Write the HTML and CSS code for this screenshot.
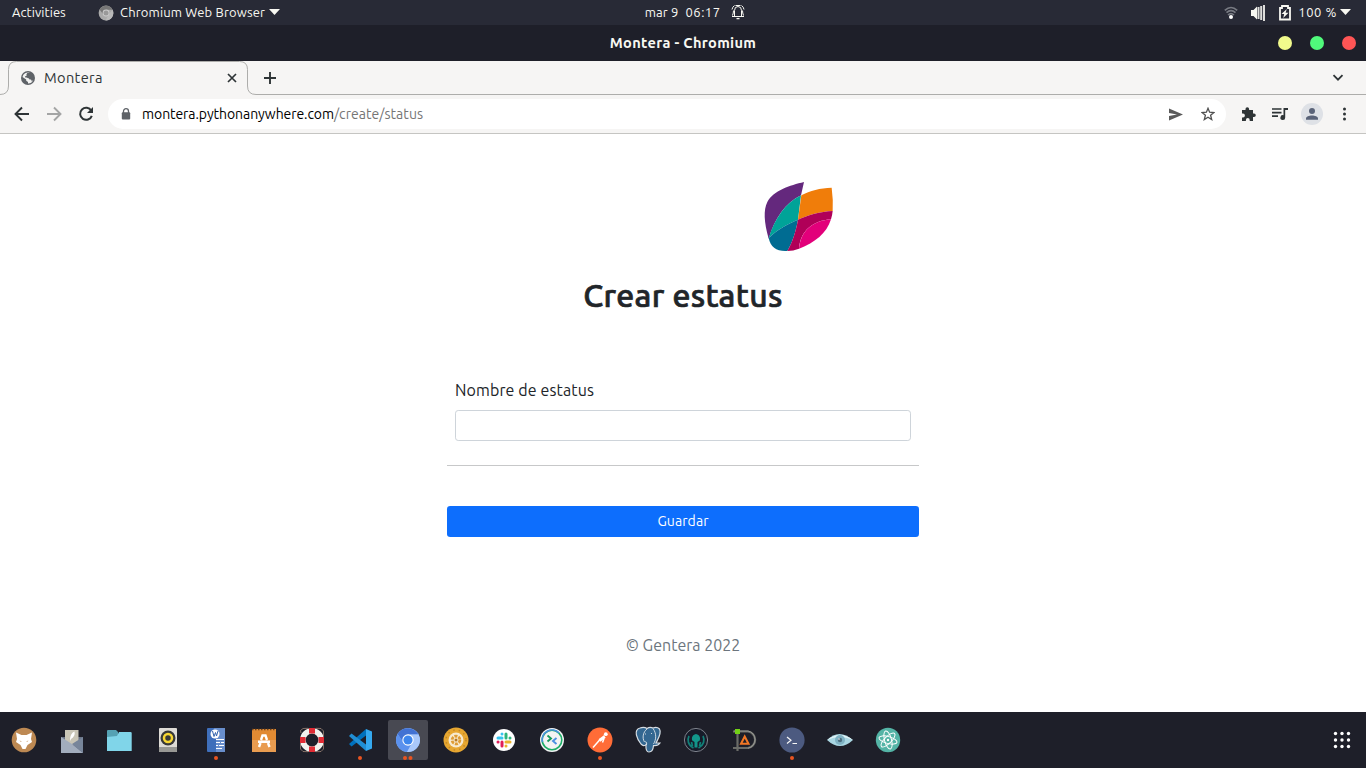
FILE: index.html
```html
<!DOCTYPE html>
<html lang="es">
<head>
<meta charset="utf-8">
<title>Montera</title>
<link rel="stylesheet" href="styles.css">
</head>
<body>
<header class="topbar">
  <span class="activities">Activities</span>
  <svg class="app-icon" width="16" height="16" viewBox="0 0 16 16"><circle cx="8" cy="8" r="7.4" fill="#aaa"/><path d="M1.5 4.5A7.4 7.4 0 0 1 14.6 4.8H8L5 9Z" fill="#777"/><path d="M14.6 4.8A7.4 7.4 0 0 1 7.5 15.4L11 9Z" fill="#b9b9b9"/><circle cx="8" cy="8" r="3.4" fill="#ccc"/><circle cx="8" cy="8" r="2.5" fill="#999"/></svg>
  <span class="app-name">Chromium Web Browser</span>
  <svg class="caret" width="11" height="6" viewBox="0 0 11 6"><path d="M0 0H11L5.5 6Z" fill="#f8f8f2"/></svg>
  <span class="date">mar 9</span><span class="clock">06:17</span>
  <svg class="bell" width="14" height="16" viewBox="0 0 14 16" fill="none" stroke="#f8f8f2"><path d="M1 12.500H13M3.500 12V6.500Q3.500 2.500 7 2.500T10.500 6.500V12M1.500 11.500Q2.500 9 2.500 6.500M12.500 11.500Q11.500 9 11.500 6.500M1 5.500Q1.400 3 3.500 1.500M13 5.500Q12.600 3 10.500 1.500M4.500 1.500H9.500" stroke-width="1"/><path d="M5.500 14.600H8.500" stroke-width="1.300"/></svg>
  <svg class="wifi" width="14" height="14" viewBox="0 0 14 14" fill="none" stroke="#787b83" stroke-width="1.600"><path d="M.8 4.400Q7-1.400 13.200 4.400M2.500 6.700Q7 2.500 11.500 6.700M4 9Q7 6.100 10 9"/><circle cx="7" cy="11" r="2" fill="#fff" stroke="none"/></svg>
  <svg class="volume" width="15" height="16" viewBox="0 0 15 16"><path d="M0 5H2.500L6 1.500V14.500L2.500 11H0Z" fill="#f8f8f2"/><path d="M7.500 2V14M10.200 1V15M13 0V16" stroke="#dededb" stroke-width="2"/></svg>
  <svg class="battery" width="12" height="16" viewBox="0 0 12 16"><path d="M1 3H3V1H9V3H11V14.500H1Z" fill="none" stroke="#f8f8f2" stroke-width="1.800"/><path d="M7.800 4L2.500 9H5.200L4.200 13L9.500 7.800H6.600Z" fill="#f8f8f2"/></svg>
  <span class="percent">100 %</span>
  <svg class="caret" width="11" height="6" viewBox="0 0 11 6"><path d="M0 0H11L5.5 6Z" fill="#f8f8f2"/></svg>
</header>
<div class="titlebar">
  <span class="window-title">Montera - Chromium</span>
  <div class="window-buttons"><i class="btn-min"></i><i class="btn-max"></i><i class="btn-close"></i></div>
</div>
<div class="tabstrip">
  <svg class="tab-outline" width="1366" height="34" viewBox="0 0 1366 34" fill="none" stroke="#adadab"><path d="M0 33.5Q8.5 33.5 8.5 25V8.500Q8.500 .5 16.500 .5H239.500Q247.500 .5 247.500 8.500V25Q247.500 33.500 256 33.500H1366"/></svg>
  <svg class="globe" width="14" height="14" viewBox="0 0 14 14"><circle cx="7" cy="7" r="7" fill="#5f6368"/><path d="M8.500 1.600L7 3.200H5.500V5H4.200V6.500H7.500L8.500 8.500H10.500V10.500L12.200 9A5.600 5.600 0 0 1 7 12.600V11L5.200 9.800V8.500L1.500 6A5.600 5.600 0 0 1 8.500 1.600Z" fill="#f3f3f2"/><path d="M8.300 1.700H6.500L5.500 3.200L7 4.500L5.500 6L7 7.200H9.500L10.500 9L12.600 8.500L12.500 5L11 2.800Z" fill="#5f6368"/></svg>
  <span class="tab-title">Montera</span>
  <svg class="tab-close" width="10" height="10" viewBox="0 0 10 10"><path d="M1 1L9 9M9 1L1 9" stroke="#2e3436" stroke-width="1.700"/></svg>
  <svg class="tab-new" width="12" height="12" viewBox="0 0 12 12"><path d="M6 0V12M0 6H12" stroke="#2e3436" stroke-width="1.900"/></svg>
  <svg class="tab-search" width="12" height="8" viewBox="0 0 12 8" fill="none"><path d="M1.500 1.200L6 5.700L10.500 1.200" stroke="#2e3436" stroke-width="1.800"/></svg>
</div>
<div class="toolbar">
  <svg class="nav" width="16" height="16" viewBox="0 0 16 16" fill="none" stroke="#2e3436" stroke-width="1.900"><path d="M15 8H2.500M8 1.500L1.500 8L8 14.500"/></svg>
  <svg class="nav" width="16" height="16" viewBox="0 0 16 16" fill="none" stroke="#a4a5a5" stroke-width="1.900"><path d="M1 8H13.500M8 1.500L14.500 8L8 14.500"/></svg>
  <svg class="nav" width="16" height="16" viewBox="0 0 16 16"><path d="M13.300 4.700A6 6 0 1 0 13.800 9.800" fill="none" stroke="#2e3436" stroke-width="2"/><path d="M15 1V7H9Z" fill="#2e3436"/></svg>
  <div class="omnibox">
    <svg width="10" height="12" viewBox="0 0 10 12"><path d="M2.500 5V3.200A2.500 2.500 0 0 1 7.500 3.200V5" fill="none" stroke="#5f6368" stroke-width="1.300"/><rect x=".8" y="4.300" width="8.400" height="7.200" rx="1" fill="#5f6368"/></svg>
    <span class="url"><span class="host">montera.pythonanywhere.com</span><span class="path">/create/status</span></span>
    <svg class="send" width="15" height="13" viewBox="0 0 15 13"><path d="M1 .5L15 6.500L1 12.500V8L9 6.500L1 5Z" fill="#5a5a5a"/></svg>
    <svg class="star" width="14" height="14" viewBox="0 0 14 14"><path d="M7 1.300L8.600 5.200L12.900 5.500L9.600 8.200L10.700 12.500L7 10.200L3.300 12.500L4.400 8.200L1.100 5.500L5.400 5.200Z" fill="none" stroke="#505050" stroke-width="1.300"/></svg>
  </div>
  <svg class="puzzle" width="15" height="15" viewBox="0 0 15 15"><path d="M1.500 3H4.500V2A1.800 1.800 0 0 1 8.100 2V3H12V6.500H13A1.800 1.800 0 0 1 13 10.100H12V14H8.700V13A1.900 1.900 0 0 0 4.900 13V14H1V10.400H2A1.900 1.900 0 0 0 2 6.600H1V3Z" fill="#2e3436"/></svg>
  <svg class="media" width="16" height="14" viewBox="0 0 16 14"><path d="M0 2H9.500M0 5.600H9.500M0 9.200H6" stroke="#2e3436" stroke-width="1.700"/><path d="M11.500 1H16V3H13.200V10.500A2.400 2.400 0 1 1 11.500 8.300Z" fill="#2e3436"/></svg>
  <svg class="avatar" width="22" height="22" viewBox="0 0 22 22"><circle cx="11" cy="11" r="11" fill="#dee1e6"/><circle cx="11" cy="8" r="3" fill="#5a6378"/><path d="M5 16.800V15.500C5 11.500 17 11.500 17 15.500V16.800Z" fill="#5a6378"/></svg>
  <svg class="dots" width="4" height="14" viewBox="0 0 4 14" fill="#2e3436"><circle cx="2.500" cy="2" r="1.500"/><circle cx="2.500" cy="7" r="1.500"/><circle cx="2.500" cy="12" r="1.500"/></svg>
</div>
<main class="page">
  <svg class="logo" width="100" height="95" viewBox="0 0 300 285"><path d="M162 36L153 76C105 100 75 145 56 206C42 155 40 120 52 96C70 62 120 46 162 36Z" fill="#64287d"/><path d="M153 76L144 149C110 163 80 180 56 204C75 145 105 100 153 76Z" fill="#00a398"/><path d="M154 76C180 62 210 54 245 53Q250 90 248 123C210 124 175 136 144 149Z" fill="#f07d0a"/><path d="M144 149C137 185 128 215 112 243C80 245 62 232 56 204C80 180 110 163 144 149Z" fill="#006c92"/><path d="M144 149C175 136 210 124 248 123Q247 135 243 148C190 152 152 180 147 236Q130 243 112 243C128 215 137 185 144 149Z" fill="#b00058"/><path d="M243 148C230 190 195 218 147 236C152 180 190 152 243 148Z" fill="#e2007a"/></svg>
  <h1 class="heading"><span>Crear estatus</span></h1>
  <form class="form">
    <label class="label" for="nombre"><span>Nombre de estatus</span></label>
    <input class="field" id="nombre" type="text">
    <hr class="rule">
    <button class="save" type="button"><span>Guardar</span></button>
  </form>
  <footer class="footer"><span>© Gentera 2022</span></footer>
</main>
<nav class="dock">
  <div class="item"><svg viewBox="0 0 40 40"><circle cx="20" cy="20" r="12.300" fill="#bd8953"/><path d="M12 12.500L17.500 15H22.500L28 12.500L27 19L28 22L23.500 25L21.500 29H18.500L16.500 25L12 22L13 19Z" fill="#fff"/><path d="M15.500 20.500L18 21.300L16.500 22ZM24.500 20.500L22 21.300L23.500 22Z" fill="#d7b896"/></svg></div>
  <div class="item"><svg viewBox="0 0 40 40"><path d="M9 17H31V33H9Z" fill="#697386"/><path d="M13 10H26.500V25H13Z" fill="#c9c5b6"/><path d="M18 19Q18.500 13 22.500 11.500Q23.500 16 19 19L18 21Z" fill="#fff"/><path d="M9 17L20 24L31 33H9Z" fill="#a2adbd"/><path d="M31 17L20 24L31 33Z" fill="#77859a"/></svg></div>
  <div class="item"><svg viewBox="0 0 40 40"><path d="M7 11Q7 10 8 10H16L18 12V18H7Z" fill="#55a2b4"/><path d="M7 17L17 16L19 12H30.500Q31.700 12 31.700 13V31H7Z" fill="#80d5e9"/></svg></div>
  <div class="item"><svg viewBox="0 0 40 40"><rect x="11" y="8" width="18" height="24" rx="1" fill="#dedbd6"/><path d="M11 27H29V31Q29 32 28 32H12Q11 32 11 31Z" fill="#989894"/><circle cx="20" cy="18" r="7.500" fill="#383838"/><circle cx="20" cy="18" r="4" fill="none" stroke="#f7d633" stroke-width="2.500"/></svg></div>
  <div class="item"><svg viewBox="0 0 40 40"><rect x="11" y="8" width="18" height="24" rx="1" fill="#3f6fbb"/><path d="M20 32V20L18 8H29V32Z" fill="#688ecc"/><circle cx="19" cy="14" r="4.500" fill="#fff"/><path d="M16.500 11L18 16.500L19.500 12.500L20.500 16L22 11" fill="none" stroke="#3564ae" stroke-width="1"/><path d="M20 19.500H28M20 22.500H24M25 22.500H28M20 25.500H22M23 25.500H28M20 28.500H26" stroke="#fff"/></svg><b></b></div>
  <div class="item"><svg viewBox="0 0 40 40"><path d="M8 9H32V32H8Z" fill="#e18a33"/><path d="M8 20H32V32H8Z" fill="#e99c50"/><path d="M8 9.500H32" stroke="#71441d" stroke-width="1.500" stroke-dasharray="1.500 1.500"/><path d="M17 20L18.500 15.500H21.500L23 20M16.500 23L15 27M24 23L25.500 27M14 21.700H26" fill="none" stroke="#fff" stroke-width="2.400"/></svg></div>
  <div class="item"><svg viewBox="0 0 40 40"><circle cx="20" cy="20" r="9.200" fill="none" stroke="#f2f1ed" stroke-width="5.600"/><path d="M20 8V13.500M20 26.500V32M8 20H13.500M26.500 20H32" stroke="#e02c35" stroke-width="6"/><g fill="none" stroke="#c5a58f" stroke-width=".6"><path d="M9 13L8.500 10.500L11 8.500L16 8.300M24 8.300L29 8.500L31.500 11L31.500 16M31.500 24L31.500 29L29 31.500L24 31.700M16 31.700L11 31.500L8.500 29L8.500 24"/></g></svg></div>
  <div class="item"><svg viewBox="0 0 40 40"><path d="M26 9L32 11.500V28.500L26 31Z" fill="#35a9ef"/><path d="M26 9L9 24L11.500 26.500L26 15.500Z" fill="#0071bd"/><path d="M26 31L9 16L11.500 13.500L26 24.500Z" fill="#208fd5"/></svg><b></b></div>
  <div class="item active"><svg viewBox="0 0 40 40"><circle cx="20" cy="20" r="12" fill="#89b5fa"/><path d="M9.600 14A12 12 0 0 1 30.500 14.500H20L15 22Z" fill="#4272d3"/><path d="M9.600 14A12 12 0 0 0 19 32L25 23L15 22Z" fill="#5b91ed"/><path d="M30.500 14.500A12 12 0 0 1 19 32L25.500 20L22 14.500Z" fill="#a9c8fa"/><circle cx="20" cy="20" r="5.700" fill="#fff"/><circle cx="20" cy="20" r="4.600" fill="#3d86ed"/></svg><b class="pair"></b></div>
  <div class="item"><svg viewBox="0 0 40 40"><circle cx="20" cy="20" r="12.500" fill="#e7a731"/><circle cx="20" cy="20" r="10" fill="none" stroke="#c38728" stroke-width="1.500" stroke-dasharray="1.500 4"/><circle cx="20" cy="20" r="7.500" fill="#f7ead0"/><circle cx="20" cy="20" r="3.900" fill="none" stroke="#df9c35" stroke-width="2.800" stroke-dasharray="3 1.080"/><circle cx="20" cy="20" r="1.500" fill="#b77923"/></svg></div>
  <div class="item"><svg viewBox="0 0 40 40"><circle cx="20" cy="20" r="11" fill="#fff"/><g stroke-width="3" stroke-linecap="round"><path d="M18 13.900V14M14 18H18" stroke="#36c5f0"/><path d="M22 14V18M26 18V17.900" stroke="#2eb67d"/><path d="M22 22H26M22 26V25.900" stroke="#ecb22e"/><path d="M18 22V26M14 22H14.100" stroke="#e01e5a"/></g></svg></div>
  <div class="item"><svg viewBox="0 0 40 40"><circle cx="20" cy="20" r="12" fill="#f3f3f3"/><circle cx="20" cy="20" r="9.800" fill="none" stroke="#1eae68" stroke-width="1.600"/><path d="M10.400 22A9.800 9.800 0 0 1 27 13" fill="none" stroke="#4a8fe0" stroke-width="1.600"/><path d="M15.500 15.500L19 18.500L15.500 21.500" stroke="#149a5b" fill="none" stroke-width="1.900"/><path d="M24.500 18L21 21L24.500 24" stroke="#4a8fe0" fill="none" stroke-width="1.900"/></svg></div>
  <div class="item"><svg viewBox="0 0 40 40"><circle cx="20" cy="20" r="12.500" fill="#ff6c37"/><circle cx="25.800" cy="14.200" r="1.900" fill="#fff"/><path d="M24.800 16.500L19.500 20.500" fill="none" stroke="#fff" stroke-width="3"/><path d="M20.500 19L13 27.500M24 18.500L22.500 22.500" fill="none" stroke="#fff" stroke-width="1.500"/></svg><b></b></div>
  <div class="item"><svg viewBox="0 0 40 40"><path d="M12 8Q16 6.500 19 8.500Q22 6.500 25 8Q29 6.500 31.500 9C34 13 30 19 28 23H32Q30 26 25.500 25.500Q25 32 21 32Q17.500 32 18 24.500Q16 27 13 24C9 19 5 10 12 8Z" fill="#336791" stroke="#d6dce2" stroke-width="1.200"/><path d="M16.500 22C14 18 15 12 19 9M25 8.500C29 14 28 20 25.500 24M17 22Q19 21 18.500 25M23 13L24 14M17 14L18 14" fill="none" stroke="#dfe5ea" stroke-width=".9"/></svg></div>
  <div class="item"><svg viewBox="0 0 40 40"><circle cx="20" cy="20" r="11.600" fill="#171b29" stroke="#898d96" stroke-width=".9"/><path d="M20 14C16 15 15.500 18 16.200 20.500L18.500 22V27.500H21.500V22L23.800 20.500C24.500 18 24 15 20 14Z" fill="#12968b"/><path d="M13 16C11 20 12 25 17.500 28M27 16C29 20 28 25 22.500 28M15.500 22L16.500 26M24.500 22L23.500 26" fill="none" stroke="#118078" stroke-width="1.700"/></svg></div>
  <div class="item"><svg viewBox="0 0 40 40" fill="none"><path d="M9 11.500H24A8 8.300 0 0 1 24 28H9M13.500 10V31" stroke="#6b6c68" stroke-width="2.200"/><path d="M10 11H24A8.300 8.700 0 0 1 24 28.200" stroke="#a2a39f" stroke-width=".8"/><rect x="11" y="9" width="5" height="5" fill="#72d116"/><path d="M17 23.800L20.700 16.500L24.500 23.800Z" stroke="#f37725" stroke-width="2"/></svg></div>
  <div class="item"><svg viewBox="0 0 40 40"><circle cx="20" cy="20" r="12.600" fill="#4c5a80"/><path d="M15 17L19 20.300L15 23.500M20.500 23.500H25" fill="none" stroke="#f7f7f7" stroke-width="1.200"/></svg><b></b></div>
  <div class="item"><svg viewBox="0 0 40 40"><path d="M7 20Q19 8 33 20Q20 32 7 20Z" fill="#a9d6e2"/><path d="M7 20Q20 10 33 20Q20 14 7 20Z" fill="#e3f3f5"/><circle cx="20" cy="20" r="5" fill="#7fb2c3"/><circle cx="20" cy="20" r="2.200" fill="#4c6f80"/><circle cx="19" cy="19" r=".8" fill="#fff"/></svg></div>
  <div class="item"><svg viewBox="0 0 40 40"><circle cx="20" cy="20" r="12.200" fill="#54b4a6"/><g fill="none" stroke="#fff"><ellipse cx="20" cy="20" rx="3.500" ry="9.300" transform="rotate(-15 20 20)"/><ellipse cx="20" cy="20" rx="3.500" ry="9.300" transform="rotate(45 20 20)"/><ellipse cx="20" cy="20" rx="3.500" ry="9.300" transform="rotate(105 20 20)"/></g><circle cx="20" cy="20" r="1.200" fill="#fff"/></svg></div>
  <div class="item apps"><svg viewBox="0 0 40 40" fill="#fff"><circle cx="13.500" cy="13.500" r="1.700"/><circle cx="20" cy="13.500" r="1.700"/><circle cx="26.500" cy="13.500" r="1.700"/><circle cx="13.500" cy="20" r="1.700"/><circle cx="20" cy="20" r="1.700"/><circle cx="26.500" cy="20" r="1.700"/><circle cx="13.500" cy="26.500" r="1.700"/><circle cx="20" cy="26.500" r="1.700"/><circle cx="26.500" cy="26.500" r="1.700"/></svg></div>
</nav>
</body>
</html>
```
FILE: styles.css
```css
* { box-sizing: border-box; }
body {
  margin: 0;
  width: 1366px;
  height: 768px;
  overflow: hidden;
  display: flex;
  flex-direction: column;
  background: #fff;
  font-family: Ubuntu, "Noto Sans", sans-serif;
}
svg { display: block; flex: none; }
span { white-space: nowrap; }

.topbar {
  height: 25px;
  display: flex;
  align-items: center;
  padding: 0 15px 0 12px;
  background: #282a36;
  color: #f8f8f2;
  font-size: 13px;
  line-height: 25px;
}
.activities { width: 86px; letter-spacing: .05px; }
.app-name { width: 149px; margin-left: 6.5px; letter-spacing: .15px; }
.topbar .caret { margin-top: -2px; }
.app-name + .caret { margin-left: .5px; }
.date { width: 41px; margin-left: 365px; letter-spacing: .1px; }
.clock { width: 46px; letter-spacing: .5px; }
.bell { margin-top: -2px; }
.wifi { margin-left: 479px; }
.volume { margin-left: 13px; }
.battery { margin-left: 13px; }
.percent { width: 42px; margin-left: 7px; letter-spacing: .55px; }

.titlebar {
  height: 36px;
  display: grid;
  grid-template-columns: 1fr auto 1fr;
  align-items: center;
  background: #1e1f29;
  color: #f8f8f2;
}
.window-title { grid-column: 2; font-size: 14.6px; font-weight: 700; line-height: 36px; letter-spacing: .33px; }
.window-buttons { display: flex; gap: 18px; justify-content: flex-end; padding-right: 10px; }
.window-buttons i { width: 14px; height: 14px; border-radius: 50%; }
.btn-min { background: #f1fa8c; }
.btn-max { background: #50fa7b; }
.btn-close { background: #ff5555; }

.tabstrip {
  height: 34px;
  display: flex;
  align-items: center;
  position: relative;
  padding: 0 22px 0 21px;
  background: #f6f5f4;
}
.tab-outline { position: absolute; left: 0; top: 0; }
.tab-title { width: 183px; margin: -2px 0 0 9px; font-size: 14.6px; letter-spacing: .35px; color: #2e3436; }
.tab-new { margin-left: 27px; }
.tab-search { margin-left: auto; }

.toolbar {
  height: 39px;
  display: flex;
  align-items: center;
  padding: 0 20px 0 14px;
  background: #f6f5f4;
  border-bottom: 1px solid #c5c5c2;
}
.nav { margin-right: 16px; }
.omnibox {
  width: 1118px;
  height: 30px;
  margin-left: -2px;
  display: flex;
  align-items: center;
  padding: 0 11px 0 13px;
  border-radius: 15px;
  background: #fff;
  font-size: 14px;
}
.url { margin-left: 11px; flex: 1; }
.host { color: #000; letter-spacing: -.07px; }
.path { color: #757575; letter-spacing: .05px; }
.star { margin-left: 18px; }
.puzzle { margin-left: 14.5px; }
.media { margin-left: 16.5px; }
.avatar { margin-left: 13px; }
.dots { margin-left: auto; }

.page {
  height: 578px;
  display: flex;
  flex-direction: column;
  align-items: center;
  background: #fff;
  color: #212529;
}
.logo { margin: 36px 0 0 234px; }
.heading {
  margin: 11px 0 0;
  font-size: 32px;
  font-weight: 500;
  line-height: 38px;
  letter-spacing: .3px;
  -webkit-text-stroke: .7px #212529;
}
.form { width: 472px; margin-top: 64px; display: flex; flex-direction: column; }
.label { margin-left: 8px; font-size: 16px; line-height: 24px; letter-spacing: .12px; }
.field {
  height: 31px;
  margin: 8px 8px 0;
  border: 1px solid #ced4da;
  border-radius: 3.2px;
  background: #fff;
}
.rule { width: 100%; height: 1px; margin: 24px 0 0; border: 0; background: #c7c8c9; }
.save {
  height: 31px;
  margin-top: 40px;
  padding: 0;
  border: 0;
  border-radius: 3.2px;
  background: #0d6efd;
  color: #fff;
  font-family: inherit;
  font-size: 14px;
  line-height: 31px;
  letter-spacing: .1px;
}
.footer { margin-top: 96px; color: #6c757d; font-size: 16px; line-height: 24px; }

.dock { height: 56px; display: flex; align-items: center; gap: 8px; padding: 0 4px; background: #1e1f29; }
.item { width: 40px; height: 40px; position: relative; border-radius: 2px; }
.item svg { width: 40px; height: 40px; }
.active { background: #484952; }
.apps { margin-left: auto; }
.item b { position: absolute; left: 18px; bottom: 0; width: 4px; height: 4px; border-radius: 50%; background: #e95420; }
.item .pair { left: 15px; box-shadow: 5.5px 0 #e95420; }
```
